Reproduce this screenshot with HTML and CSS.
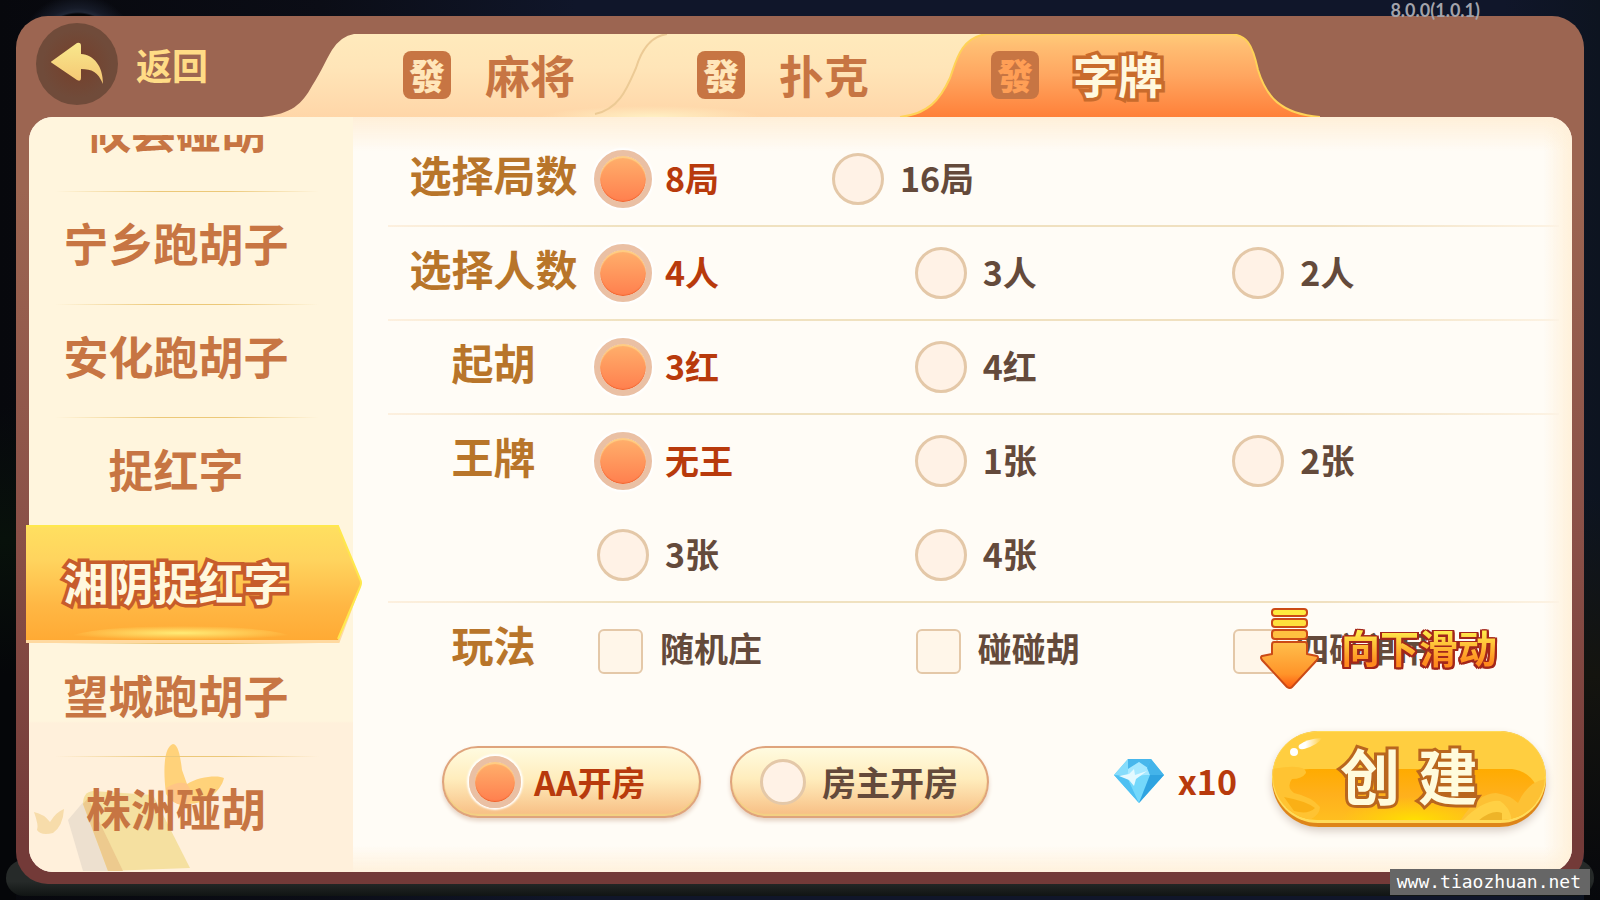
FILE: index.html
```
<!DOCTYPE html>
<html lang="zh-CN">
<head>
    <meta charset="UTF-8">
    <title>创建房间</title>
    <link rel="stylesheet" href="styles.css">
</head>
<body>
    <span class="version">8.0.0(1.0.1)</span>

    <div class="window">
        <header class="header">
            <button class="back" type="button">
                <span class="back-icon">
                    <svg width="54" height="44" viewBox="0 0 54 44" aria-hidden="true">
                        <defs>
                            <linearGradient id="arrowGold" x1="0" y1="0" x2="0" y2="1">
                                <stop offset="0" stop-color="#f8e88d"/>
                                <stop offset="1" stop-color="#f5c672"/>
                            </linearGradient>
                        </defs>
                        <path d="M2 19 L27 1 Q31 0 31 4 V12 C44 13 53 24 53 42 C48 30 42 27 31 27 V36 Q31 40 27 38 L2 21 Q0 20 2 19 Z" fill="url(#arrowGold)"/>
                    </svg>
                </span>
                <span>返回</span>
            </button>

            <nav class="tabs">
                <svg class="tabs-bg" viewBox="0 0 1058 83" preserveAspectRatio="none" aria-hidden="true">
                    <defs>
                        <linearGradient id="tabCream" x1="0" y1="0" x2="0" y2="1">
                            <stop offset="0" stop-color="#ffeabc"/>
                            <stop offset="0.4" stop-color="#ffe5b8"/>
                            <stop offset="1" stop-color="#ffd6a8"/>
                        </linearGradient>
                        <linearGradient id="tabOrange" x1="0" y1="0" x2="0" y2="1">
                            <stop offset="0" stop-color="#ffcb78"/>
                            <stop offset="0.15" stop-color="#ffbd72"/>
                            <stop offset="0.5" stop-color="#ffa660"/>
                            <stop offset="1" stop-color="#ff8039"/>
                        </linearGradient>
                        <radialGradient id="tabGlow">
                            <stop offset="0" stop-color="#fff0c4"/>
                            <stop offset="1" stop-color="#fff0c4" stop-opacity="0"/>
                        </radialGradient>
                    </defs>
                    <path d="M0 83 C30 80 40 70 50 52 C60 36 64 26 70 16 Q79 2 92 0 H760 V83 Z" fill="url(#tabCream)"/>
                    <ellipse cx="390" cy="83" rx="110" ry="11" fill="url(#tabGlow)"/>
                    <path d="M333 80 C358 75 366 52 374 34 C380 14 390 2 405 0" fill="none" stroke="#ecca95" stroke-width="2"/>
                    <path d="M638 83 C666 80 678 66 688 44 C694 28 698 4 724 0 H970 C984 2 990 8 996 36 C1004 62 1018 80 1058 83 Z" fill="url(#tabOrange)"/>
                    <path d="M638 83 C666 80 678 66 688 44 C694 28 698 4 724 0 H970 C984 2 990 8 996 36 C1004 62 1018 80 1058 83" fill="none" stroke="#ffd257" stroke-width="2"/>
                </svg>
                <button class="tab" type="button"><span class="tile">發</span>麻将</button>
                <button class="tab" type="button"><span class="tile">發</span>扑克</button>
                <button class="tab active" type="button"><span class="tile">發</span>字牌</button>
            </nav>
        </header>

        <div class="panel">
            <aside class="sidebar">
                <svg class="decor" width="200" height="130" viewBox="0 0 200 130" aria-hidden="true">
                    <path d="M39 78 L56 58 L84 129 H54 Z" fill="#ede0cf"/>
                    <path d="M54 62 Q54 50 64 49 L124 53 L161 126 L79 129 Z" fill="#f5e0a0"/>
                    <path d="M54 62 L59 56 L94 129 H79 Z" fill="#edca8e"/>
                    <path d="M137 52 C133 20 137 4 144 2 C150 2 152 20 153 28 L158 42 C170 34 190 33 195 36 C192 50 175 62 160 62 Q146 66 137 52 Z" fill="#ffd27a"/>
                    <path d="M137 46 Q150 38 158 42 Q168 56 157 63 Q142 64 137 46 Z" fill="#ffc585"/>
                    <path d="M5 70 Q15 72 21 80 Q27 70 35 67 Q34 84 24 91 Q12 94 8 88 Q10 84 5 70 Z" fill="#f7dcaa"/>
                </svg>
                <ul class="games">
                    <li><a href="#">攸县碰胡</a></li>
                    <li><a href="#">宁乡跑胡子</a></li>
                    <li><a href="#">安化跑胡子</a></li>
                    <li><a href="#">捉红字</a></li>
                    <li class="active">
                        <a href="#">湘阴捉红字</a>
                        <svg class="ribbon" viewBox="0 0 336 120" preserveAspectRatio="none" aria-hidden="true">
                            <defs>
                                <linearGradient id="ribbonFill" x1="0" y1="0" x2="0" y2="1">
                                    <stop offset="0" stop-color="#ffe060"/>
                                    <stop offset="0.3" stop-color="#ffd45e"/>
                                    <stop offset="0.7" stop-color="#ffb744"/>
                                    <stop offset="1" stop-color="#ffaa34"/>
                                </linearGradient>
                                <radialGradient id="ribbonGlow">
                                    <stop offset="0" stop-color="#ffec76"/>
                                    <stop offset="1" stop-color="#ffec76" stop-opacity="0"/>
                                </radialGradient>
                            </defs>
                            <path d="M0 116 H312 L333 60" fill="none" stroke="#ffd9a0" stroke-width="4"/>
                            <path d="M0 0 H312 L334 54 Q336 58 334 62 L312 115 H0 Z" fill="url(#ribbonFill)"/>
                            <path d="M40 115 A115 14 0 0 1 270 115 Z" fill="url(#ribbonGlow)"/>
                            <path d="M0 1 H312 L334 54 Q336 58 334 62 L312 114" fill="none" stroke="#ffe84d" stroke-width="2"/>
                        </svg>
                    </li>
                    <li><a href="#">望城跑胡子</a></li>
                    <li><a href="#">株洲碰胡</a></li>
                </ul>
            </aside>

            <main class="content">
                <div class="options">
                    <div class="row" role="radiogroup" aria-label="选择局数">
                        <h2>选择局数</h2>
                        <div class="choices narrow">
                            <label><input type="radio" name="rounds" checked><span>8局</span></label>
                            <label><input type="radio" name="rounds"><span>16局</span></label>
                        </div>
                    </div>
                    <div class="row" role="radiogroup" aria-label="选择人数">
                        <h2>选择人数</h2>
                        <div class="choices">
                            <label><input type="radio" name="players" checked><span>4人</span></label>
                            <label><input type="radio" name="players"><span>3人</span></label>
                            <label><input type="radio" name="players"><span>2人</span></label>
                        </div>
                    </div>
                    <div class="row" role="radiogroup" aria-label="起胡">
                        <h2>起胡</h2>
                        <div class="choices">
                            <label><input type="radio" name="start" checked><span>3红</span></label>
                            <label><input type="radio" name="start"><span>4红</span></label>
                        </div>
                    </div>
                    <div class="row" role="radiogroup" aria-label="王牌">
                        <h2>王牌</h2>
                        <div class="choices">
                            <label><input type="radio" name="joker" checked><span>无王</span></label>
                            <label><input type="radio" name="joker"><span>1张</span></label>
                            <label><input type="radio" name="joker"><span>2张</span></label>
                            <label><input type="radio" name="joker"><span>3张</span></label>
                            <label><input type="radio" name="joker"><span>4张</span></label>
                        </div>
                    </div>
                    <div class="row" role="group" aria-label="玩法">
                        <h2>玩法</h2>
                        <div class="choices">
                            <label><input type="checkbox"><span>随机庄</span></label>
                            <label><input type="checkbox"><span>碰碰胡</span></label>
                            <label><input type="checkbox"><span>四碰单吊</span></label>
                        </div>
                    </div>

                    <div class="scroll-hint">
                        <svg width="62" height="82" viewBox="0 0 62 82" aria-hidden="true">
                            <defs>
                                <linearGradient id="downFill" x1="0" y1="0" x2="0" y2="1">
                                    <stop offset="0" stop-color="#ffbf4c"/>
                                    <stop offset="0.7" stop-color="#ff9429"/>
                                    <stop offset="1" stop-color="#ff5a10"/>
                                </linearGradient>
                            </defs>
                            <g stroke="#cb4a16" stroke-width="2">
                                <rect x="13" y="1" width="35" height="7" rx="3" fill="#ffec3e"/>
                                <rect x="13" y="11" width="35" height="8" rx="3" fill="#ffe03c"/>
                                <rect x="13" y="22" width="35" height="9" rx="3" fill="#ffc040"/>
                                <path d="M15 34 H46 Q48 34 48 37 V46 L58 48 Q60 49 58 52 L33 79 Q31 81 28 79 L3 52 Q1 49 3 48 L13 46 V37 Q13 34 15 34 Z" fill="url(#downFill)" stroke-linejoin="round"/>
                            </g>
                        </svg>
                        <span class="hint-text"><span>向下滑动</span></span>
                    </div>
                </div>

                <footer class="footer">
                    <label class="pill"><input type="radio" name="pay" checked><span>AA开房</span></label>
                    <label class="pill"><input type="radio" name="pay"><span>房主开房</span></label>
                    <div class="cost">
                        <svg width="50" height="44" viewBox="0 0 50 44" aria-hidden="true">
                            <path d="M14 0 H37 L50 16 L25 44 L0 16 Z" fill="#5bcdf8"/>
                            <path d="M14 0 H37 L33 9 L25 3 L14 10 Z" fill="#48b7ec"/>
                            <path d="M14 0 L0 16 L13 17 L14 10 Z" fill="#86dcfb"/>
                            <path d="M14 10 L25 3 L34 9 L36 16 L13 18 Z" fill="#a6e8ff"/>
                            <path d="M37 0 L50 16 L36 16 L33 9 Z" fill="#44b4ea"/>
                            <path d="M0 16 L13 18 L25 44 Z" fill="#4fc0f2"/>
                            <path d="M13 18 L36 16 L25 44 Z" fill="#74d8fb"/>
                            <path d="M36 16 L50 16 L25 44 Z" fill="#2fa3e0"/>
                            <path d="M5 17 L15 15 L20 10 L21 16 L33 12 L22 20 L20 27 L15 21 Z" fill="#e4f9ff"/>
                        </svg>
                        <span>x10</span>
                    </div>
                    <button class="create" type="button">
                        <svg class="create-bg" viewBox="0 0 274 96" preserveAspectRatio="none" aria-hidden="true">
                            <defs>
                                <linearGradient id="goldLower" x1="0" y1="0" x2="0" y2="1">
                                    <stop offset="0" stop-color="#ffab00"/>
                                    <stop offset="0.5" stop-color="#ffb01c"/>
                                    <stop offset="1" stop-color="#ffbf20"/>
                                </linearGradient>
                                <radialGradient id="goldGlow">
                                    <stop offset="0" stop-color="#ffe100"/>
                                    <stop offset="1" stop-color="#ffd400" stop-opacity="0"/>
                                </radialGradient>
                                <linearGradient id="shine" x1="0" y1="0" x2="1" y2="0">
                                    <stop offset="0.3" stop-color="#fff"/>
                                    <stop offset="1" stop-color="#fff" stop-opacity="0"/>
                                </linearGradient>
                                <clipPath id="createShape"><rect x="1" y="1" width="272" height="88" rx="44"/></clipPath>
                            </defs>
                            <rect width="274" height="96" rx="47" fill="#de8519"/>
                            <rect width="274" height="92" rx="46" fill="#ffdb5a"/>
                            <g clip-path="url(#createShape)">
                                <rect width="274" height="90" fill="#ffce40"/>
                                <path d="M14 90 V58 Q18 38 38 38 H240 Q256 40 264 54 V90 Z" fill="url(#goldLower)"/>
                                <ellipse cx="142" cy="90" rx="74" ry="24" fill="url(#goldGlow)"/>
                                <path d="M0 38 Q34 32 34 42 Q30 48 20 48 Q14 56 22 62 Q40 66 48 76 Q48 84 36 90 H0 Z" fill="#ffc332"/>
                                <path d="M12 66 Q34 70 43 77 Q36 84 22 80 Z" fill="#fab016"/>
                                <path d="M188 90 Q206 62 224 62 Q238 64 246 72 Q256 50 274 48 V90 Z" fill="#fdc134"/>
                                <path d="M190 90 Q212 68 228 70 Q238 76 240 90 Z" fill="#ffd044"/>
                                <path d="M206 90 Q220 78 230 82 L230 90 Z" fill="#eeb428"/>
                            </g>
                            <circle cx="22" cy="21" r="4" fill="#fff"/>
                            <path d="M27 14 Q34 8 50 7 Q46 14 32 18 Q25 19 27 14 Z" fill="url(#shine)"/>
                        </svg>
                        <span>创</span><span>建</span>
                    </button>
                </footer>
            </main>
        </div>
    </div>

    <a class="site" href="#">www.tiaozhuan.net</a>
</body>
</html>
```
FILE: styles.css
```
:root {
    --frame-top: #9c6551;
    --frame-bottom: #733a38;
    --cream: #fff5dd;
    --paper: #fffcf6;
    --brown: #c77543;
    --title: #b8752a;
    --text: #644a3b;
    --selected: #b83a0c;
}

* {
    margin: 0;
    padding: 0;
    box-sizing: border-box;
}

body {
    min-height: 100vh;
    padding: 16px;
    display: flex;
    position: relative;
    overflow: hidden;
    font-family: "Noto Sans CJK SC", sans-serif;
    font-weight: 700;
    color: var(--text);
    background:
        radial-gradient(circle at 78px 54px, #060608 40px, #202736 42px, #161b28 46px, transparent 60px),
        linear-gradient(transparent 45%, #08110b 60%, #050609 75%, #050609) left / 16px 100% no-repeat,
        linear-gradient(transparent 55%, #14140f 75%, #07080c) right / 16px 100% no-repeat,
        linear-gradient(to right, #07080d, #0b0d16 20%, #10162a 36%, #10162a 94%, #0d1420);
}

/* dark ledge under the window */
body::before {
    content: "";
    position: absolute;
    left: 6px;
    right: 6px;
    bottom: 4px;
    height: 36px;
    border-radius: 24px;
    background: linear-gradient(#262a29 60%, #101413);
}

button {
    border: none;
    background: none;
    font: inherit;
    color: inherit;
    cursor: pointer;
}

a {
    color: inherit;
    text-decoration: none;
}

.version {
    position: absolute;
    top: 0;
    right: 120px;
    z-index: 2;
    font-family: Lato, sans-serif;
    font-size: 18px;
    line-height: 20px;
    color: #a3a3ab;
}

.window {
    flex: 1;
    position: relative;
    display: flex;
    flex-direction: column;
    padding: 0 12px 12px 13px;
    border-radius: 32px;
    background: linear-gradient(var(--frame-top) 20%, #8a5047 60%, var(--frame-bottom) 95%);
}

/* Header */
.header {
    height: 101px;
    display: flex;
    justify-content: space-between;
}

.back {
    display: flex;
    align-items: center;
    gap: 18px;
    align-self: flex-start;
    margin: 7px 0 0 7px;
    font-size: 36px;
    line-height: 40px;
    color: #ffdc86;
}

.back-icon {
    width: 82px;
    height: 82px;
    border-radius: 50%;
    display: flex;
    align-items: center;
    justify-content: center;
    background: radial-gradient(#74432f 20%, #704b3a 60%);
}

.tabs {
    position: relative;
    flex: 0 1 1058px;
    display: flex;
    margin: 18px 252px 0 0;
    padding: 0 96px 0 80px;
}

.tabs-bg {
    position: absolute;
    inset: 0;
    width: 100%;
    height: 100%;
}

.tab {
    position: relative;
    flex: 1;
    display: flex;
    align-items: center;
    justify-content: center;
    gap: 34px;
    padding-bottom: 2px;
    font-size: 45px;
    line-height: 60px;
    color: var(--brown);
}

.tile {
    width: 48px;
    height: 48px;
    border-radius: 8px;
    background: var(--brown);
    color: #ffe6ba;
    font-size: 36px;
    font-weight: 900;
    line-height: 46px;
    text-align: center;
}

.tab.active {
    color: #fff8de;
    -webkit-text-stroke: 7px #c96b2c;
    paint-order: stroke fill;
}

.tab.active .tile {
    color: #ff9f56;
    -webkit-text-stroke: 0;
}

/* Main panel */
.panel {
    flex: 1;
    display: flex;
    border-radius: 24px;
    background: var(--paper);
}

.sidebar {
    position: relative;
    flex: 0 0 324px;
    padding-top: 18px;
    border-radius: 24px 0 0 24px;
    background: linear-gradient(var(--cream) 604px, #fff0db 606px);
}

.decor {
    position: absolute;
    left: 0;
    bottom: 0;
}

.games {
    height: 734px;
    position: relative;
    list-style: none;
    clip-path: inset(0 -12px 0 -4px);
    display: flex;
    flex-direction: column;
    justify-content: flex-end;
}

.games li {
    position: relative;
    flex: 0 0 113px;
    display: flex;
    align-items: center;
    justify-content: center;
    padding: 0 30px 10px 0;
    font-size: 45px;
    line-height: 60px;
    color: var(--brown);
}

.games li + li::before {
    content: "";
    position: absolute;
    top: 0;
    left: 26px;
    right: 34px;
    height: 1px;
    background: linear-gradient(to right, transparent, #ecc878 40%, #ecc878 65%, transparent);
}

.games li.active {
    color: #fff8de;
}

.games .active a {
    position: relative;
    z-index: 1;
    -webkit-text-stroke: 7px #c75c2b;
    paint-order: stroke fill;
}

.ribbon {
    position: absolute;
    top: -5px;
    left: -3px;
    width: 336px;
    height: 120px;
}

.content {
    flex: 1;
    min-width: 0;
    display: flex;
    flex-direction: column;
    padding: 15px 13px 45px 35px;
    border-radius: 0 24px 24px 0;
    background:
        linear-gradient(#ffefd8, transparent 34px),
        linear-gradient(to left, #fff0d9, transparent 28px),
        linear-gradient(to top, #fff1dc, transparent 26px);
}

/* Options */
.options {
    position: relative;
    flex: 1;
}

.row {
    display: flex;
    position: relative;
}

.row + .row::before {
    content: "";
    position: absolute;
    top: -1px;
    left: 0;
    right: 0;
    height: 2px;
    background: linear-gradient(to right, #fdf0df, #f0e2c0 20%, #f0e0c0 80%, #fdf3e4);
}

.row h2 {
    flex: 0 0 206px;
    height: 84px;
    padding-left: 5px;
    font-size: 42px;
    line-height: 84px;
    text-align: center;
    color: var(--title);
}

.choices {
    flex: 1;
    display: grid;
    grid-template-columns: repeat(3, 1fr);
    padding-right: 12px;
}

.choices.narrow {
    grid-template-columns: repeat(2, 235px);
}

.choices label {
    height: 94px;
}

label {
    display: flex;
    align-items: center;
    gap: 13px;
    font-size: 34px;
    line-height: 44px;
    white-space: nowrap;
    cursor: pointer;
}

.choices label span {
    padding-bottom: 2px;
}

input {
    appearance: none;
    flex: none;
    cursor: pointer;
}

input[type="radio"] {
    width: 52px;
    height: 52px;
    margin: 0 3px;
    border: 3px solid #e4c8a8;
    border-radius: 50%;
    background: #fff2e6;
}

input[type="radio"]:checked {
    width: 58px;
    height: 58px;
    margin: 0;
    border: 6px solid #eac0a4;
    background: linear-gradient(#ffb06c, #ff7f4e) padding-box;
    box-shadow: 0 0 2px 2px #fff, inset 0 2px 1px #ffcf85, inset 0 -1px 1px #f0622c;
}

label:has(input[type="radio"]:checked) {
    color: var(--selected);
}

input[type="checkbox"] {
    width: 45px;
    height: 45px;
    margin: 4px 4px 0;
    border: 2px solid #e4c8a8;
    border-radius: 6px;
    background: #fff6e9;
}

input[type="checkbox"]:checked {
    background: #ff9a5c;
}

.scroll-hint {
    position: absolute;
    top: 476px;
    right: 62px;
    display: flex;
    align-items: center;
    gap: 20px;
    pointer-events: none;
}

.hint-text {
    font-size: 39px;
    line-height: 48px;
    padding-bottom: 6px;
    filter: drop-shadow(2px 0 0 #a3261a) drop-shadow(-2px 0 0 #a3261a) drop-shadow(0 2px 0 #a3261a) drop-shadow(0 -1px 0 #a3261a);
}

.hint-text span {
    background: linear-gradient(#ffe94a 25%, #ff8a1e 80%);
    background-clip: text;
    color: transparent;
}

/* Footer */
.footer {
    height: 96px;
    display: flex;
    align-items: center;
    padding: 0 13px 0 54px;
}

.pill {
    width: 259px;
    height: 72px;
    margin: 6px 29px 0 0;
    padding-left: 25px;
    border: 2px solid #dfa47c;
    border-radius: 36px;
    background: linear-gradient(#fffbe0, #ffedbd 45%, #f8c288 95%);
    box-shadow: 0 3px 4px #e5d3c5, inset 0 -2px 1px #f3d183;
}

.pill input[type="radio"] {
    width: 46px;
    height: 46px;
}

.pill input[type="radio"]:checked {
    width: 52px;
    height: 52px;
}

.cost {
    display: flex;
    align-items: center;
    gap: 14px;
    margin-left: auto;
    padding-top: 4px;
    font-size: 34px;
    line-height: 44px;
    color: var(--selected);
}

.create {
    position: relative;
    width: 274px;
    height: 96px;
    margin-left: 35px;
    display: flex;
    align-items: center;
    justify-content: center;
    gap: 18px;
    padding-bottom: 10px;
    font-size: 60px;
    line-height: 72px;
    color: #fffbdc;
    border-radius: 48px;
    box-shadow: 0 4px 8px #d8cdc4;
}

.create span {
    position: relative;
    -webkit-text-stroke: 6px #b9661e;
    paint-order: stroke fill;
}

.create-bg {
    position: absolute;
    inset: 0;
    width: 100%;
    height: 100%;
}

.site {
    position: absolute;
    right: 10px;
    bottom: 5px;
    padding: 0 9px 0 7px;
    background: #666;
    color: #fff;
    font-family: "DejaVu Sans Mono", monospace;
    font-size: 18px;
    font-weight: 400;
    line-height: 26px;
}
```
